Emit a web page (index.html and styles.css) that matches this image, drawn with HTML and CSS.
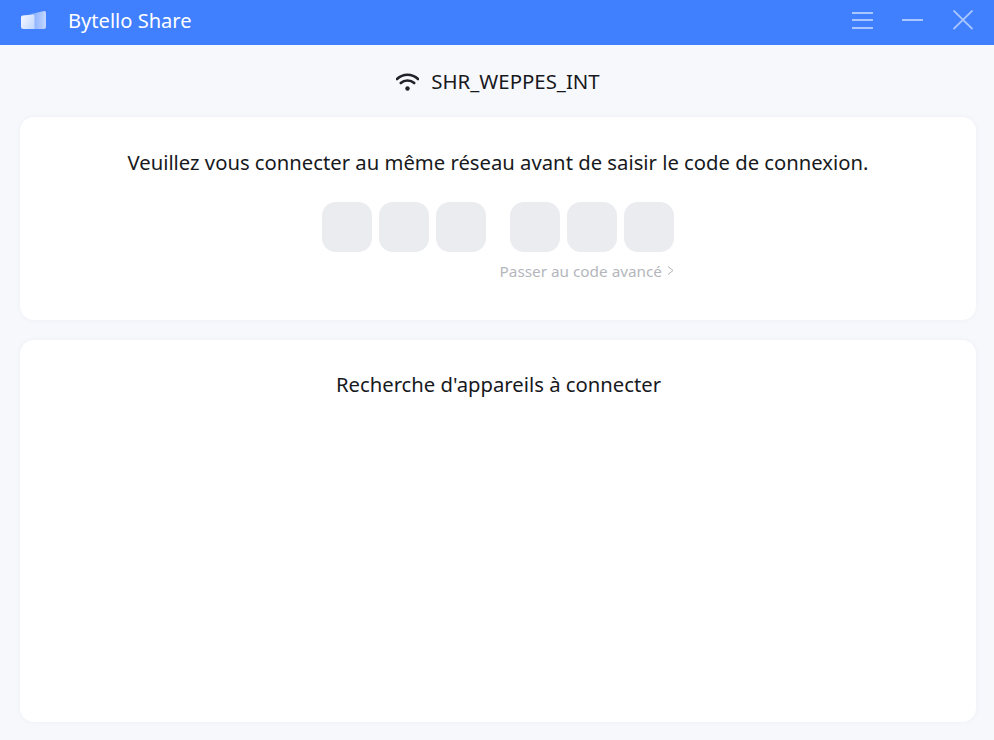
FILE: index.html
```html
<!DOCTYPE html>
<html lang="fr">
<head>
<meta charset="utf-8">
<title>Bytello Share</title>
<link rel="stylesheet" href="styles.css">
</head>
<body>
<div class="app">
  <header class="titlebar">
    <svg class="logo" width="25" height="18" viewBox="0 0 25 18">
      <defs>
        <linearGradient id="lg1" x1="0" y1="0" x2="1" y2="0.6"><stop offset="0" stop-color="#f6f9ff"/><stop offset="1" stop-color="#c8daff"/></linearGradient>
        <linearGradient id="lg2" x1="0" y1="0" x2="1" y2="0"><stop offset="0" stop-color="#7fa9ff"/><stop offset="1" stop-color="#c4d7ff"/></linearGradient>
      </defs>
      <path d="M10 3 L23.300 0.100 Q25 0 25 1.700 V16 Q25 18 23 18 H12 Z" fill="url(#lg2)"/>
      <path d="M0 6.500 Q0 4.700 1.800 4.500 L11.500 3.400 Q13.500 3.300 13.500 5.200 V18 H2.500 Q0 18 0 15.500 Z" fill="url(#lg1)"/>
    </svg>
    <span class="app-name">Bytello Share</span>
    <div class="controls">
      <svg width="21" height="18" viewBox="0 0 21 18"><path d="M0 2H21M0 9H21M0 17H21" stroke="#a9c6ff" stroke-width="2" fill="none"/></svg>
      <svg width="22" height="18" viewBox="0 0 22 18"><path d="M0 9H21" stroke="#a9c6ff" stroke-width="2" fill="none"/></svg>
      <svg width="20" height="20" viewBox="0 0 20 20"><path d="M0.500 0.500L19.500 19M19.500 0.500L0.500 19" stroke="#a9c6ff" stroke-width="1.800" fill="none"/></svg>
    </div>
  </header>
  <main class="content">
    <div class="network">
      <svg width="23" height="18" viewBox="0 0 23 18">
        <path d="M1 6C7 0.300 16 0.300 22 6M4.800 10C8.500 6.700 14.500 6.700 18.200 10" stroke="#1f2329" stroke-width="2.600" fill="none" stroke-linecap="round"/>
        <circle cx="11.500" cy="15.500" r="2.200" fill="#1f2329"/>
      </svg>
      <span class="network-name">SHR_WEPPES_INT</span>
    </div>
    <section class="card card-code">
      <p class="message">Veuillez vous connecter au même réseau avant de saisir le code de connexion.</p>
      <div class="code-row">
        <div class="code-group"><div class="cell"></div><div class="cell"></div><div class="cell"></div></div>
        <div class="code-group"><div class="cell"></div><div class="cell"></div><div class="cell"></div></div>
      </div>
      <div class="advanced-row">
        <span class="advanced">Passer au code avancé</span>
        <svg width="7" height="10" viewBox="0 0 7 10"><path d="M1 0.500L6 4.500L1 8.500" stroke="#b4b6bc" stroke-width="1" fill="none"/></svg>
      </div>
    </section>
    <section class="card card-search">
      <p class="message message-search">Recherche d'appareils à connecter</p>
    </section>
  </main>
</div>
</body>
</html>
```
FILE: styles.css
```css
* { box-sizing: border-box; }
html, body { margin: 0; padding: 0; height: 100%; }
body { font-family: "Noto Sans", "Open Sans", sans-serif; color: #17191d; background: #f7f8fb; overflow: hidden; }
.app { width: 994px; height: 740px; display: flex; flex-direction: column; }
.titlebar { height: 45px; flex: none; background: #4080ff; display: flex; align-items: center; padding: 0 21px 5px; }
.logo { flex: none; margin-right: 22px; }
.app-name { color: #fff; font-size: 20.1px; line-height: 30px; margin-top: 1px; }
.controls { margin-left: auto; display: flex; align-items: center; gap: 29px; }
.content { flex: 1; padding: 0 18px 18px 20px; display: flex; flex-direction: column; }
.network { height: 72px; flex: none; display: flex; align-items: center; justify-content: center; gap: 11px; font-size: 20.4px; padding-top: 2px; }
.network-name { margin-top: -2px; padding-left: 1px; }
.card { background: #fff; border-radius: 14px; box-shadow: 0 0 4px rgba(220, 226, 245, 0.4); text-align: center; }
.card-code { height: 203px; padding-top: 30px; margin-bottom: 20px; flex: none; }
.card-search { height: 382px; flex: none; padding-top: 29px; }
.message { margin: 0; font-size: 20.25px; line-height: 30px; }
.message-search { padding-left: 1px; }
.code-row { display: flex; justify-content: center; gap: 24px; margin-top: 25px; }
.code-group { display: flex; gap: 7px; }
.cell { width: 50px; height: 50px; border-radius: 14px; background: #ebecf0; }
.advanced-row { display: flex; align-items: center; justify-content: flex-end; gap: 5px; width: 654px; margin-top: 7px; height: 24px; }
.advanced { font-size: 15.3px; color: #b4b6bc; }
```
